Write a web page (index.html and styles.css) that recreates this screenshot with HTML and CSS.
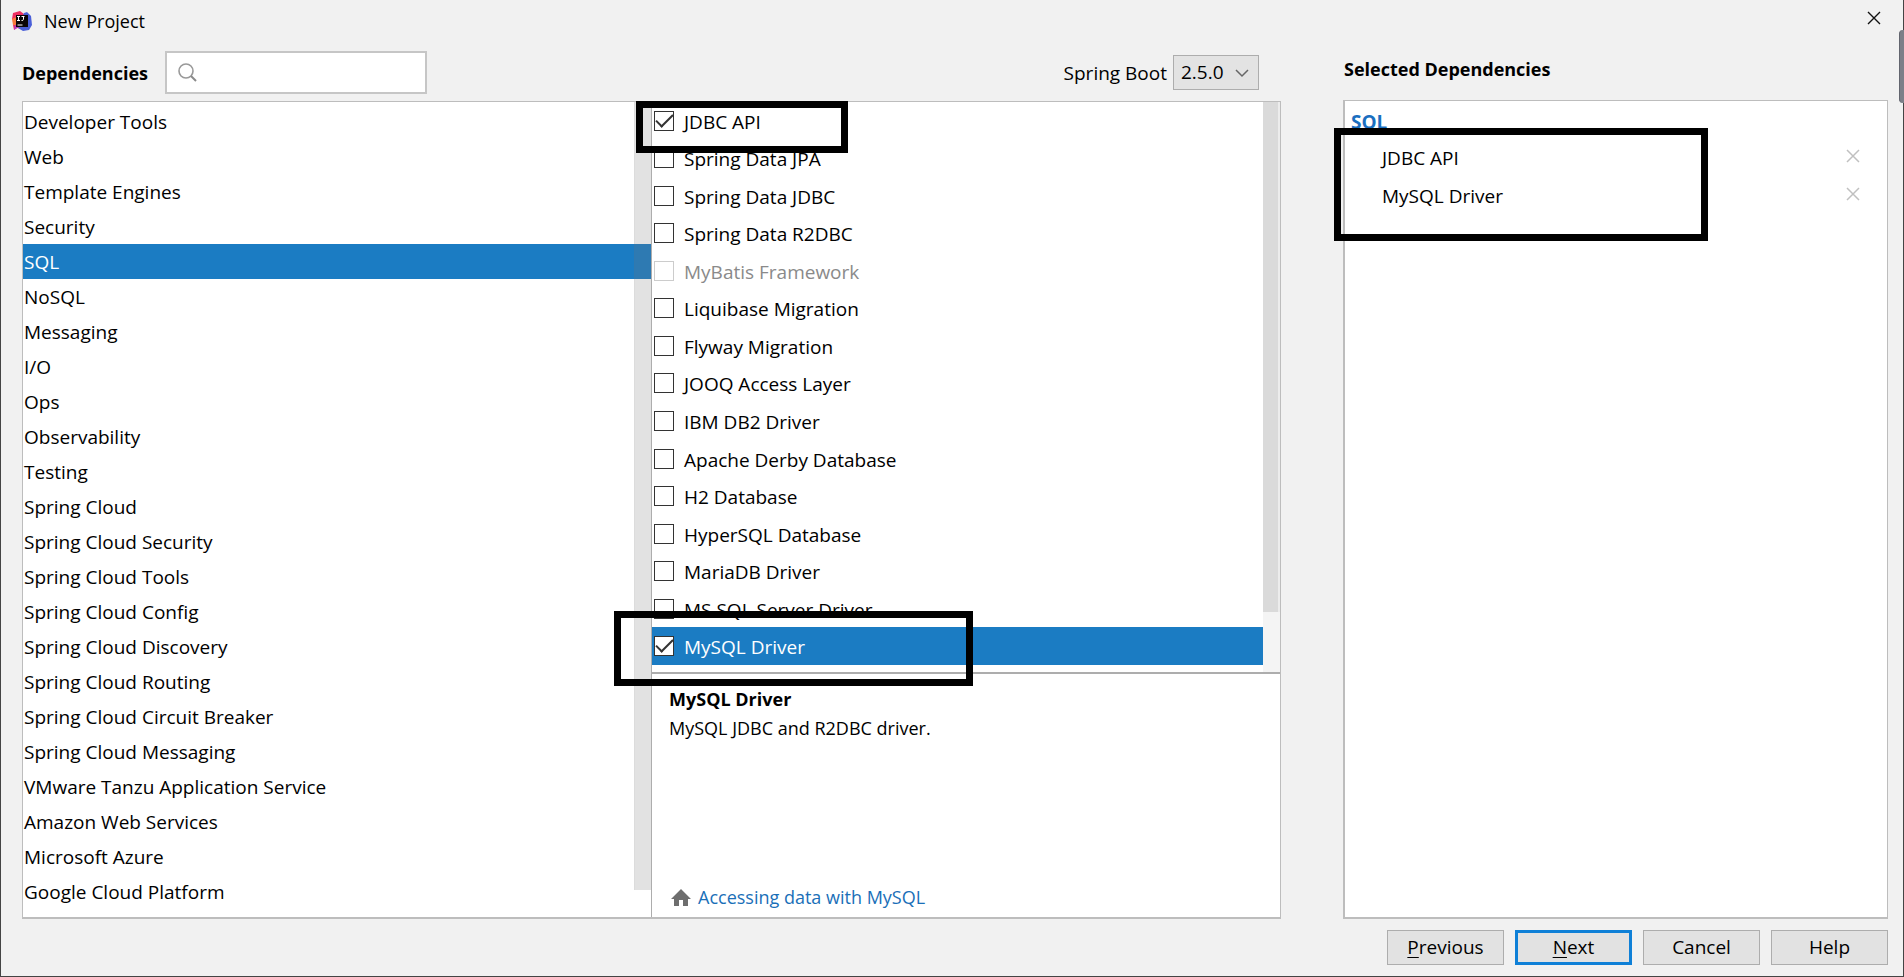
FILE: index.html
```html
<!DOCTYPE html>
<html lang="en">
<head>
<meta charset="utf-8">
<title>New Project</title>
<link rel="stylesheet" href="styles.css">
</head>
<body>
<div class="window">
  <header class="titlebar">
    <svg class="logo" viewBox="0 0 20 20" aria-hidden="true">
      <path d="M1 2 8 0l4 3v15l-7-1-3 2-1-5 1-3-2-3z" fill="#ee2f62"/>
      <path d="M0 8l4-2v8l-3 0z" fill="#f97a3c"/>
      <path d="M12 2l3-1 4 4 1 9-3 5-6 1-5-3z" fill="#4a5fd8"/>
      <path d="M2 19l1-5 5 2-3 1z" fill="#b33fc4"/>
      <rect x="4" y="4" width="12" height="12" fill="#0a0508"/>
      <path d="M5 5.500h3M6.500 5.500v4M5 9.500h3M9.500 5.500h3M11.500 5.500v3q0 1-2 1M5.500 14h5" stroke="#fff" stroke-width="1" fill="none"/>
    </svg>
    <h1 class="title">New Project</h1>
    <button class="close" type="button" aria-label="Close"><svg viewBox="0 0 12 12"><path d="M0 0 12 12M12 0 0 12" stroke="#111" stroke-width="1.400"/></svg></button>
  </header>
  <main class="content">
    <section class="available">
      <div class="toolbar">
        <label class="heading" for="search">Dependencies</label>
        <div class="search">
          <svg viewBox="0 0 19 19" aria-hidden="true"><circle cx="8" cy="8" r="7" fill="none" stroke="#999" stroke-width="1.600"/><path d="M13 13l5 5" stroke="#8a8a8a" stroke-width="2"/></svg>
          <input id="search" type="text">
        </div>
        <label class="version-label" for="version">Spring Boot</label>
        <div class="version">
          <select id="version"><option>2.5.0</option></select>
          <svg viewBox="0 0 14 8" aria-hidden="true"><path d="M1 1l6 6 6-6" fill="none" stroke="#666" stroke-width="1.500"/></svg>
        </div>
      </div>
      <div class="panes">
        <div class="categories">
          <ul class="category-list">
            <li>Developer Tools</li><li>Web</li><li>Template Engines</li><li>Security</li><li class="selected">SQL</li><li>NoSQL</li><li>Messaging</li><li>I/O</li><li>Ops</li><li>Observability</li><li>Testing</li><li>Spring Cloud</li><li>Spring Cloud Security</li><li>Spring Cloud Tools</li><li>Spring Cloud Config</li><li>Spring Cloud Discovery</li><li>Spring Cloud Routing</li><li>Spring Cloud Circuit Breaker</li><li>Spring Cloud Messaging</li><li>VMware Tanzu Application Service</li><li>Amazon Web Services</li><li>Microsoft Azure</li><li>Google Cloud Platform</li>
          </ul>
          <div class="thumb"></div>
        </div>
        <div class="detail-column">
          <div class="picker">
            <div class="options">
              <div class="option"><label><input type="checkbox" checked><span>JDBC API</span></label><span class="mark mark-jdbc"></span></div>
              <div class="option"><label><input type="checkbox"><span>Spring Data JPA</span></label></div>
              <div class="option"><label><input type="checkbox"><span>Spring Data JDBC</span></label></div>
              <div class="option"><label><input type="checkbox"><span>Spring Data R2DBC</span></label></div>
              <div class="option disabled"><label><input type="checkbox" disabled><span>MyBatis Framework</span></label></div>
              <div class="option"><label><input type="checkbox"><span>Liquibase Migration</span></label></div>
              <div class="option"><label><input type="checkbox"><span>Flyway Migration</span></label></div>
              <div class="option"><label><input type="checkbox"><span>JOOQ Access Layer</span></label></div>
              <div class="option"><label><input type="checkbox"><span>IBM DB2 Driver</span></label></div>
              <div class="option"><label><input type="checkbox"><span>Apache Derby Database</span></label></div>
              <div class="option"><label><input type="checkbox"><span>H2 Database</span></label></div>
              <div class="option"><label><input type="checkbox"><span>HyperSQL Database</span></label></div>
              <div class="option"><label><input type="checkbox"><span>MariaDB Driver</span></label></div>
              <div class="option"><label><input type="checkbox"><span>MS SQL Server Driver</span></label></div>
              <div class="option selected"><label><input type="checkbox" checked><span>MySQL Driver</span></label><span class="mark mark-mysql"></span></div>
            </div>
            <div class="track"><div class="track-thumb"></div></div>
          </div>
          <div class="description">
            <h2>MySQL Driver</h2>
            <p>MySQL JDBC and R2DBC driver.</p>
            <a href="#"><svg viewBox="0 0 20 17" aria-hidden="true"><path d="M10 0 20 10h-3v7h-5v-6H8v6H3v-7H0z" fill="#6e6e6e"/></svg>Accessing data with MySQL</a>
          </div>
        </div>
      </div>
    </section>
    <section class="chosen">
      <h2 class="heading chosen-heading">Selected Dependencies</h2>
      <div class="chosen-box">
        <h3>SQL</h3>
        <ul>
          <li>JDBC API<button type="button" aria-label="Remove JDBC API"><svg viewBox="0 0 12 12"><path d="M0 0 12 12M12 0 0 12" stroke="#c0c0c0" stroke-width="1.500"/></svg></button></li>
          <li>MySQL Driver<button type="button" aria-label="Remove MySQL Driver"><svg viewBox="0 0 12 12"><path d="M0 0 12 12M12 0 0 12" stroke="#c0c0c0" stroke-width="1.500"/></svg></button></li>
        </ul>
        <span class="mark mark-chosen"></span>
      </div>
    </section>
  </main>
  <footer class="actions">
    <button type="button"><u>P</u>revious</button>
    <button type="button" class="primary"><u>N</u>ext</button>
    <button type="button">Cancel</button>
    <button type="button">Help</button>
  </footer>
  <div class="page-scroll"></div>
</div>
</body>
</html>
```
FILE: styles.css
```css
* { box-sizing: border-box; }
body, h1, h2, h3, p, ul { margin: 0; padding: 0; }
ul { list-style: none; }
body, button, input, select {
  font-family: "Open Sans", "Noto Sans", sans-serif;
  font-size: 19px;
  font-weight: 400;
  color: #000;
}
svg { display: block; flex: none; overflow: visible; }
.window {
  position: relative;
  display: flex;
  flex-direction: column;
  min-height: 100vh;
  background: #f1f1f1;
  border: 1px solid #444;
  border-top: 0;
}
.titlebar { display: flex; align-items: center; height: 42px; padding: 0 23px 0 11px; }
.logo { width: 20px; height: 20px; }
.title { flex: 1; margin-left: 12px; font-size: 18px; font-weight: 400; }
.close { padding: 0 0 6px; border: 0; background: none; }
.close svg { width: 12px; height: 12px; }

.content { flex: 1; display: flex; gap: 62px; padding: 0 15px 0 21px; }
.available { flex: 1259; min-width: 0; display: flex; flex-direction: column; }
.chosen { flex: 545; min-width: 0; display: flex; flex-direction: column; }
.heading { font-size: 18px; font-weight: 700; }

.toolbar { display: flex; align-items: center; height: 59px; padding: 2px 22px 0 0; }
.toolbar .heading { width: 124px; }
.search {
  display: flex; align-items: center; gap: 10px;
  width: 262px; height: 43px; margin: 0 auto 0 19px; padding: 0 11px;
  background: #fff; border: 2px solid #c6c6c6;
}
.search svg { width: 19px; height: 19px; }
.search input { flex: 1; min-width: 0; border: 0; outline: 0; background: none; }
.version { position: relative; margin-left: 6px; }
.version select {
  display: block; appearance: none; width: 86px; height: 35px; padding: 0 0 2px 7px;
  background: #e3e3e3; border: 1px solid #adadad; border-radius: 0;
}
.version svg { position: absolute; right: 10px; top: 14px; width: 14px; height: 8px; pointer-events: none; }

.panes {
  flex: 1; display: grid; grid-template-columns: 628fr 629fr;
  background: #fff; border: 1px solid #bdbdbd; border-bottom-width: 2px;
}
.categories { position: relative; padding: 2px 0 8px; }
.category-list li { height: 35px; padding-left: 1px; line-height: 36px; }
.category-list .selected { background: #1b7cc3; color: #fff; }
.thumb {
  position: absolute; top: 0; right: 0; bottom: 27px; width: 17px;
  background: rgba(120, 120, 120, .21); border-left: 1px solid rgba(120, 120, 120, .05);
}
.detail-column {
  display: grid; grid-template-rows: 572fr 243fr;
  border-left: 1px solid #adadad;
}
.picker { display: flex; border-bottom: 2px solid #adadad; }
.options { flex: 1; display: flex; flex-direction: column; padding-bottom: 7px; }
.option { position: relative; flex: 1; display: flex; align-items: center; }
.option label { display: flex; align-items: center; gap: 10px; padding-left: 2px; }
.option label span { padding-top: 2px; }
.option input {
  appearance: none; width: 20px; height: 20px; margin: 0;
  display: grid; place-items: center;
  background: #fff; border: 1px solid #333; outline: 0;
}
.option input:checked::after {
  content: ""; width: 15px; height: 7px; margin-bottom: 5px;
  border-left: 2px solid #333; border-bottom: 2px solid #333;
  transform: rotate(-45deg);
}
.option.disabled { color: #8a8a8a; }
.option.disabled input { border-color: #ccc; }
.option.selected { background: #1b7cc3; color: #fff; }
.track { width: 17px; background: #f4f4f4; }
.track-thumb { height: 510px; background: #dadada; border-right: 2px solid #ececec; }

.description { display: flex; flex-direction: column; align-items: flex-start; padding: 11px 17px 6px; }
.description h2 { font-size: 18px; line-height: 28px; }
.description p { font-size: 18px; line-height: 30px; }
.description a {
  display: flex; align-items: center; gap: 7px; margin-top: auto;
  padding-left: 2px; color: #1a6fb8; font-size: 18px; line-height: 28px; text-decoration: none;
}
.description svg { width: 20px; height: 17px; }

.chosen-heading { height: 58px; padding-top: 1px; padding-left: 1px; line-height: 52px; }
.chosen-box {
  position: relative; flex: 1; padding: 7px 28px 0 6px;
  background: #fff; border: 1px solid #bdbdbd; border-width: 1px 1px 2px 2px;
}
.chosen-box h3 { font-size: 19px; line-height: 28px; color: #1a6fc0; }
.chosen-box li { display: flex; align-items: center; justify-content: space-between; height: 38px; padding-left: 31px; padding-top: 5px; }
.chosen-box button { padding: 0 0 4px; border: 0; background: none; }
.chosen-box button svg { width: 12px; height: 12px; }

.mark { position: absolute; z-index: 1; border: 7px solid #000; pointer-events: none; }
.mark-jdbc { left: -16px; top: -1px; width: 212px; height: 52px; }
.mark-mysql { left: -38px; top: -16px; width: 359px; height: 75px; }
.mark-chosen { left: -11px; top: 27px; width: 374px; height: 113px; }

.actions { display: flex; justify-content: flex-end; gap: 11px; padding: 11px 15px 11px; }
.actions button {
  width: 117px; height: 35px; padding: 0 0 2px;
  background: #e2e2e2; border: 1px solid #adadad; border-radius: 0;
}
.actions .primary { border: 3px solid #0f80d7; }
.actions u { text-underline-offset: 3px; }

.page-scroll {
  position: absolute; top: 30px; right: -1px; width: 5px; height: 73px;
  background: #7c7f88; border-left: 1px solid #62656e; border-radius: 4px 0 0 4px;
}
```
